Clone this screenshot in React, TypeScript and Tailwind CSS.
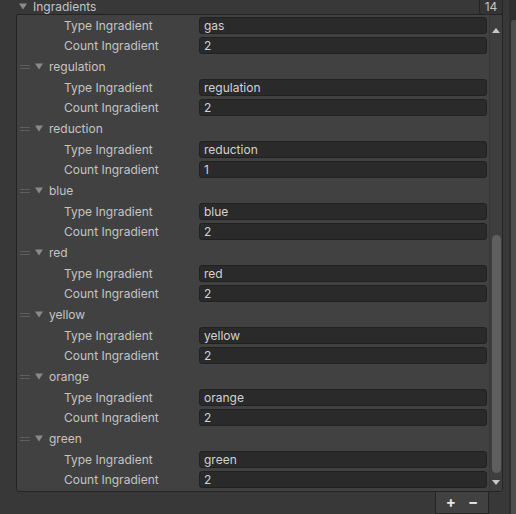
import React from "react";

const groups = [
  { name: "regulation", count: "2" },
  { name: "reduction", count: "1" },
  { name: "blue", count: "2" },
  { name: "red", count: "2" },
  { name: "yellow", count: "2" },
  { name: "orange", count: "2" },
  { name: "green", count: "2" },
];

function Tri({ color = "#8a8a8a" }: { color?: string }) {
  return (
    <svg width="8" height="7" viewBox="0 0 8 7" className="shrink-0">
      <path d="M0 0.5 L8 0.5 L4 6.5 Z" fill={color} />
    </svg>
  );
}

function Handle() {
  return (
    <div className="flex flex-col gap-[2px] w-[10px] shrink-0">
      <div className="h-[1px] bg-[#5e5e5e]" />
      <div className="h-[1px] bg-[#5e5e5e]" />
    </div>
  );
}

function Field({ label, value, tall }: { label: string; value: string; tall?: boolean }) {
  return (
    <div className={`flex items-center ${tall ? "h-[21px] pb-[1px]" : "h-[20px]"}`}>
      <div className="w-[182px] pl-[47px] pt-[2px] text-[12px] text-[#c4c4c4] leading-none whitespace-nowrap">{label}</div>
      <div className="w-[288px] h-[17px] rounded-[3px] bg-[#2a2a2a] border border-[#212121] flex items-center pl-[4px] pt-[2px] text-[12px] text-[#d2d2d2] leading-none">
        {value}
      </div>
    </div>
  );
}

function Group({ name, count }: { name: string; count: string }) {
  return (
    <div className="flex flex-col">
      <div className="h-[21px] flex items-center pl-[3px]">
        <Handle />
        <div className="ml-[5px]">
          <Tri />
        </div>
        <span className="ml-[6px] pt-[1px] text-[12px] text-[#c4c4c4] leading-none">{name}</span>
      </div>
      <Field label="Type Ingradient" value={name} />
      <Field label="Count Ingradient" value={count} tall />
    </div>
  );
}

export default function App() {
  return (
    <div
      className="w-[516px] h-[514px] bg-[#383838] flex overflow-hidden"
      style={{ fontFamily: "Inter, 'Noto Sans', sans-serif" }}
    >
      <div className="w-[503px] flex flex-col">
        <div className="h-[14px] flex items-center relative">
          <div className="ml-[19px] mt-[-2px]">
            <Tri color="#8c8c8c" />
          </div>
          <span className="ml-[6px] mt-[-1px] text-[12px] text-[#c4c4c4] leading-none">Ingradients</span>
          <div className="absolute right-0 top-0 w-[24px] h-[15px] bg-[#353535] border-l border-b border-r border-[#242424] rounded-b-[3px] flex items-center justify-center text-[12px] text-[#c4c4c4] leading-none pb-[1px]">
            14
          </div>
        </div>
        <div className="ml-[16px] h-[478px] bg-[#414141] border border-[#242424] rounded-b-[3px] flex overflow-hidden">
          <div className="flex-1 flex flex-col">
            <Field label="Type Ingradient" value="gas" />
            <Field label="Count Ingradient" value="2" tall />
            {groups.map((g) => (
              <Group key={g.name} name={g.name} count={g.count} />
            ))}
          </div>
          <div className="w-[13px] bg-[#3e3e3e] border-l border-[#383838] flex flex-col items-center">
            <div className="h-[18px] flex items-end justify-center">
              <svg width="8" height="5" viewBox="0 0 8 5">
                <path d="M0 5 L8 5 L4 0 Z" fill="#c8c8c8" />
              </svg>
            </div>
            <div className="h-[202px]" />
            <div className="w-[9px] h-[238px] rounded-full bg-[#5f5f5f]" />
            <div className="flex-1 flex items-center justify-center">
              <svg width="8" height="5" viewBox="0 0 8 5">
                <path d="M0 0 L8 0 L4 5 Z" fill="#c8c8c8" />
              </svg>
            </div>
          </div>
        </div>
        <div className="flex-1 flex justify-end pr-[14px]">
          <div className="w-[54px] h-full bg-[#414141] border-l border-r border-b border-[#242424] flex items-center justify-center gap-[12px] text-[#e6e6e6] text-[15px] font-bold leading-none pb-[2px]">
            <span>+</span>
            <span>−</span>
          </div>
        </div>
      </div>
      <div className="flex-1 flex">
        <div className="w-[6px] bg-[#383838]" />
        <div className="flex-1 bg-[#2f2f2f] flex justify-end">
          <div className="w-[5px] mt-[20px] h-[494px] bg-[#4d4d4d] rounded-tl-[3px]" />
        </div>
      </div>
    </div>
  );
}
